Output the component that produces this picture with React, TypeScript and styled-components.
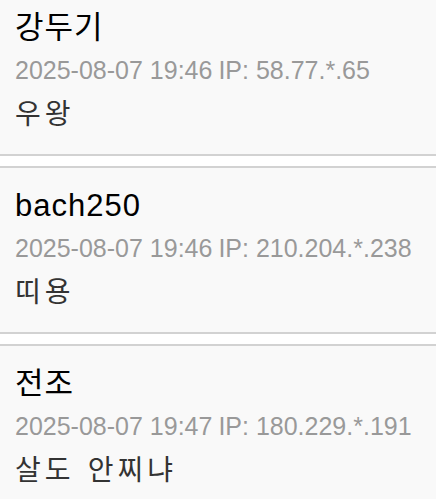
import { createGlobalStyle, styled } from "styled-components";

interface IComment {
  id: number;
  name: string;
  date: string;
  ip: string;
  body: string;
}

const GlobalStyle = createGlobalStyle`
  html, body {
    margin: 0;
    padding: 0;
    background: #ffffff;
    font-family: "Liberation Sans", "Noto Sans CJK KR", sans-serif;
  }
`;

const List = styled.ul`
  list-style: none;
  margin: -12px 0 0;
  padding: 0;
  display: flex;
  flex-direction: column;
  gap: 10px;
`;

const Item = styled.li`
  background: #f9f9f9;
  border-top: 2px solid #d2d2d2;
  border-bottom: 2px solid #d2d2d2;
  padding: 20px 15px 24px;
`;

const Name = styled.div`
  font-size: 31px;
  line-height: 36px;
  letter-spacing: 1px;
  color: #000000;
`;

const Meta = styled.div`
  margin-top: 9px;
  font-size: 25px;
  line-height: 30px;
  color: #999999;
  white-space: nowrap;
`;

const Ip = styled.span`
  margin-left: 6px;
`;

const Body = styled.div`
  margin-top: 9px;
  font-family: "Noto Sans CJK KR", sans-serif;
  font-size: 28px;
  line-height: 36px;
  letter-spacing: 4px;
  word-spacing: 3px;
  color: #333333;
`;

const comments: IComment[] = [
  { id: 1, name: "강두기", date: "2025-08-07 19:46", ip: "58.77.*.65", body: "우왕" },
  { id: 2, name: "bach250", date: "2025-08-07 19:46", ip: "210.204.*.238", body: "띠용" },
  { id: 3, name: "전조", date: "2025-08-07 19:47", ip: "180.229.*.191", body: "살도 안찌냐" },
];

function App() {
  return (
    <>
      <GlobalStyle />
      <List>
        {comments.map((c) => (
          <Item key={c.id}>
            <Name>{c.name}</Name>
            <Meta>
              {c.date}
              <Ip>IP: {c.ip}</Ip>
            </Meta>
            <Body>{c.body}</Body>
          </Item>
        ))}
      </List>
    </>
  );
}

export default App;
